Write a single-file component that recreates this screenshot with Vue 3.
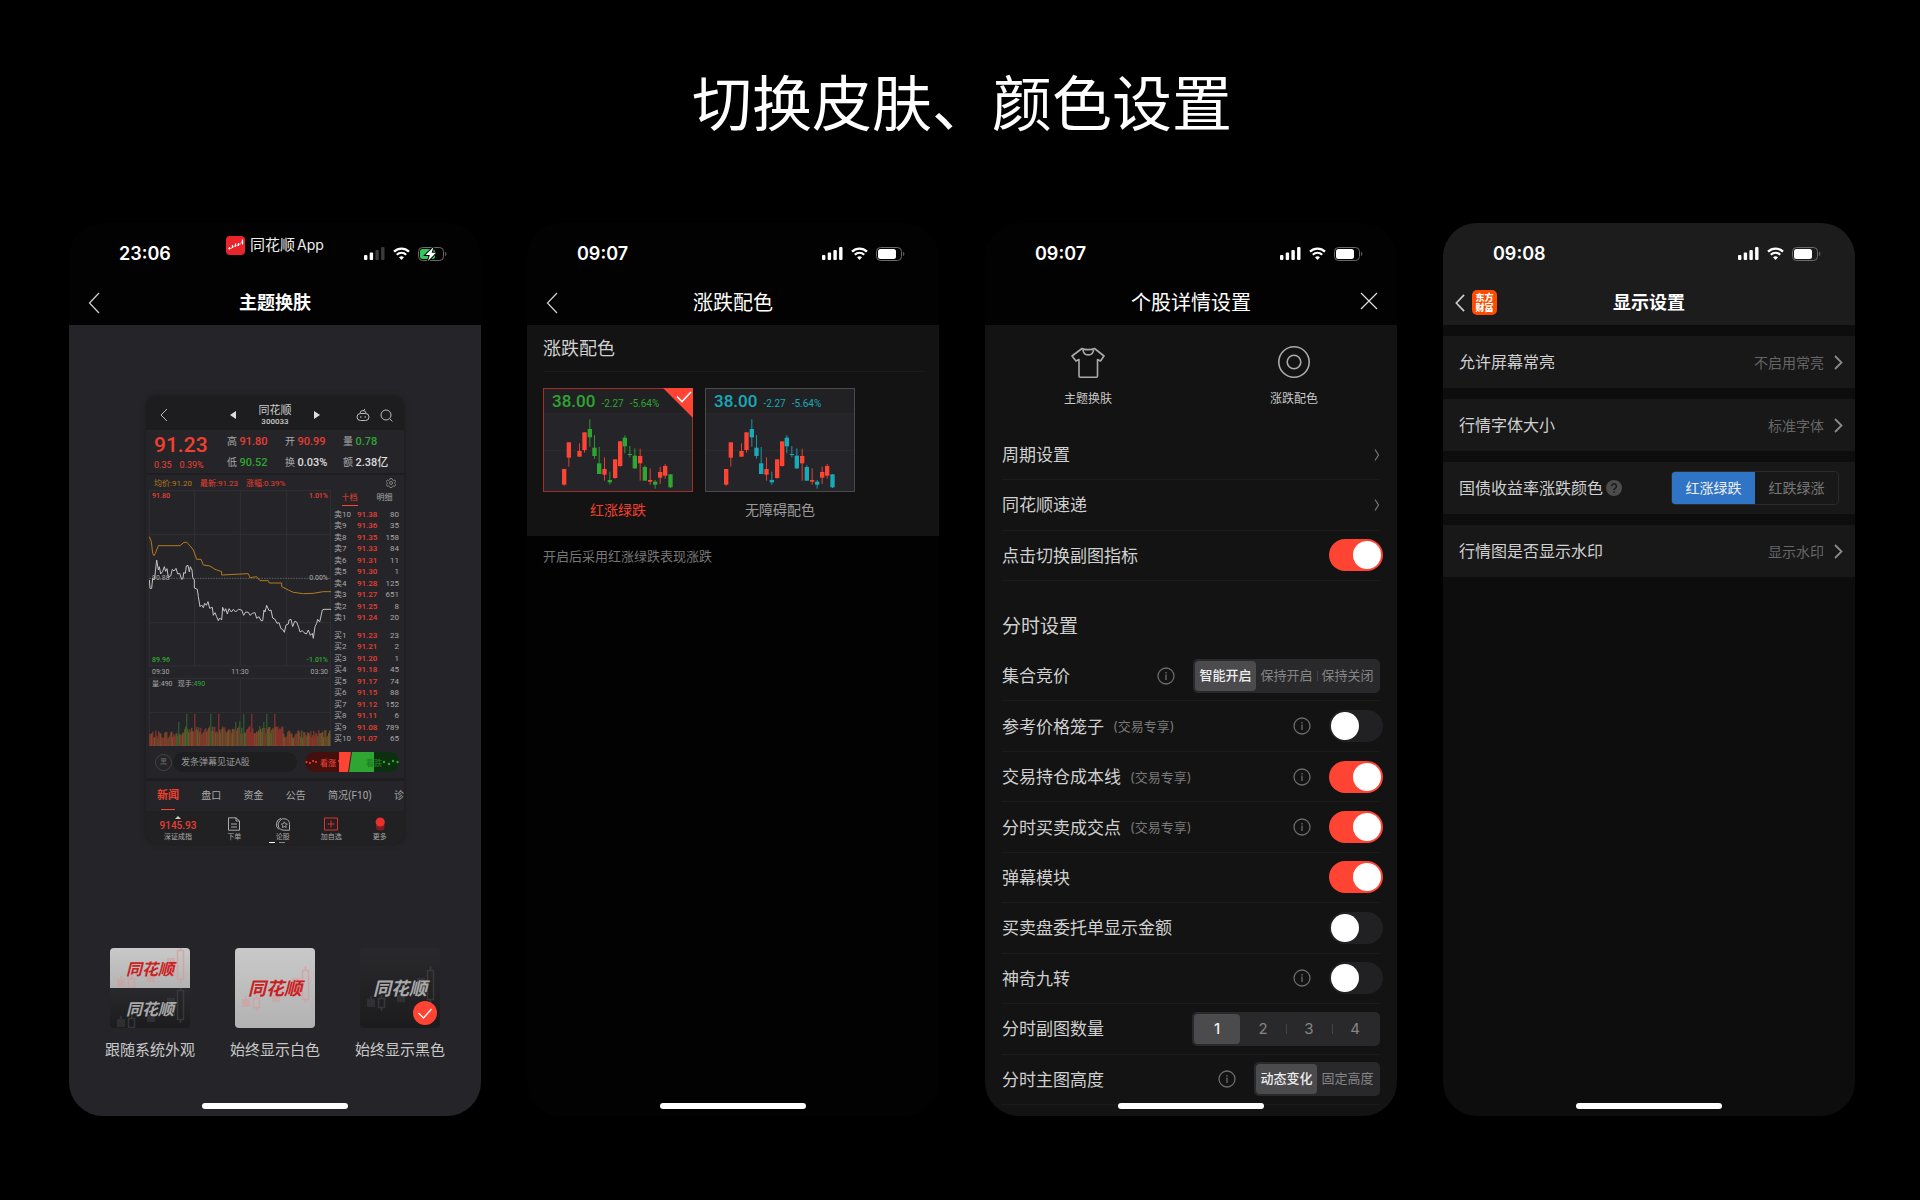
<template>
  <main class="board">
    <h1 class="board-title">切换皮肤、颜色设置</h1>

    <div class="phones">
      <section
        v-for="phone in phones"
        :key="phone.id"
        class="phone"
        :class="'phone-' + phone.id"
      >
        <!-- 状态栏 -->
        <div class="status">
          <span class="time">{{ phone.time }}</span>
          <span v-if="phone.id === 'skin'" class="live">
            <svg class="live-icon" viewBox="0 0 19 19">
              <rect width="19" height="19" rx="4" fill="#e9252b" />
              <path d="M2 13l1.500-1.500L5 13l1.500-2.500 1.500.5 1.500-2.500L11 10l1.500-2.500L14 8.500l2-3 1 1" fill="none" stroke="#ffc4c4" stroke-width=".8" />
              <path d="M3.500 11v2.500M6.500 9v3M9.500 7.500v3.500M12.500 7v3M16.500 3.500v5" stroke="#fff" stroke-width="1.200" />
            </svg>
            <span>同花顺<span class="latin">App</span></span>
          </span>
          <span v-else></span>
          <span class="signals">
            <svg class="signal" viewBox="0 0 21 13">
              <rect x="0" y="8" width="3.400" height="5" rx="1" fill="#fff" />
              <rect x="5.700" y="5.500" width="3.400" height="7.500" rx="1" fill="#fff" />
              <rect x="11.400" y="3" width="3.400" height="10" rx="1" :fill="phone.id === 'skin' ? '#3a3a3a' : '#fff'" />
              <rect x="17.100" y="0" width="3.400" height="13" rx="1" :fill="phone.id === 'skin' ? '#3a3a3a' : '#fff'" />
            </svg>
            <svg class="wifi" viewBox="0 0 17 13">
              <path d="M1 4.600a10.800 10.800 0 0 1 15 0" fill="none" stroke="#fff" stroke-width="2.300" />
              <path d="M3.800 7.700a6.700 6.700 0 0 1 9.400 0" fill="none" stroke="#fff" stroke-width="2.200" />
              <path d="M8.500 13l-2.500-2.700a3.700 3.700 0 0 1 5 0z" fill="#fff" />
            </svg>
            <svg class="battery" viewBox="0 0 29 14">
              <rect x=".5" y=".5" width="25" height="13" rx="4" fill="none" stroke="#6b6b6b" />
              <path d="M27.200 4.800c1.500.6 1.500 3.800 0 4.400z" fill="#6b6b6b" />
              <template v-if="phone.id === 'skin'">
                <rect x="2" y="2" width="15" height="10" rx="2.500" fill="#34c759" />
                <path class="bolt" d="M15.500 0L7.500 8h4.300L10 14l8-8.200h-4.300z" fill="#fff" stroke="#020202" stroke-width="2" />
              </template>
              <rect v-else x="2" y="2" width="18" height="10" rx="2.500" fill="#fff" />
            </svg>
          </span>
        </div>

        <!-- 导航栏 -->
        <header class="nav">
          <span class="nav-left">
            <button v-if="phone.id !== 'stock'" type="button" class="icon-btn" aria-label="返回">
              <svg class="back" viewBox="0 0 12 22">
                <path d="M11 1L1.500 11 11 21" fill="none" stroke="currentColor" :stroke-width="phone.id === 'display' ? 2 : 1.300" />
              </svg>
            </button>
            <span v-if="phone.id === 'display'" class="em-logo">东方<br />财富</span>
          </span>
          <h2>{{ phone.title }}</h2>
          <span class="nav-right">
            <button v-if="phone.id === 'stock'" type="button" class="icon-btn" aria-label="关闭">
              <svg class="close" viewBox="0 0 18 18">
                <path d="M1 1l16 16M17 1L1 17" stroke="#ddd" stroke-width="1.200" />
              </svg>
            </button>
          </span>
        </header>

        <!-- 主题换肤 -->
        <div v-if="phone.id === 'skin'" class="skin-body">
          <div class="mini">
            <div class="mini-head">
              <svg class="mini-back" viewBox="0 0 8 14"><path d="M7 1L1 7l6 6" fill="none" stroke="#bbb" /></svg>
              <svg class="mini-arrow" viewBox="0 0 6 8"><path d="M6 0v8L0 4z" fill="#ddd" /></svg>
              <div class="mini-name">
                <b>同花顺</b>
                <span>300033</span>
              </div>
              <svg class="mini-arrow" viewBox="0 0 6 8"><path d="M0 0v8l6-4z" fill="#ddd" /></svg>
              <svg class="mini-bot" viewBox="0 0 14 14">
                <rect x="1" y="5.500" width="12" height="7" rx="3.500" fill="none" stroke="#bbb" />
                <path d="M4 5.500a3 3 0 0 1 6 0M7 3l2-2" fill="none" stroke="#bbb" />
                <circle cx="4.800" cy="9" r=".8" fill="#bbb" /><circle cx="9.200" cy="9" r=".8" fill="#bbb" />
              </svg>
              <svg class="mini-search" viewBox="0 0 13 13">
                <circle cx="6" cy="6" r="5" fill="none" stroke="#bbb" /><path d="M9.600 9.600l2.800 2.800" stroke="#bbb" />
              </svg>
            </div>

            <div class="quote">
              <div class="quote-main">
                <strong>91.23</strong>
                <span>0.35</span><span>0.39%</span>
              </div>
              <div v-for="q in quotes" :key="q.name" class="quote-item">
                {{ q.name }} <b :class="q.tone">{{ q.value }}</b>
              </div>
            </div>

            <div class="avg-line">
              <span class="gold">均价:91.20</span>
              <span class="red">最新:91.23</span>
              <span class="red">涨幅:0.39%</span>
              <svg class="gear" viewBox="0 0 10 10">
                <path
                  d="M4 .5h2l.4 1.300 1 .6 1.300-.4 1 1.700-.9 1v.9l.9 1-1 1.700-1.300-.4-1 .6L6 9.500H4l-.4-1-1-.6-1.300.4-1-1.700.9-1v-.9l-.9-1 1-1.700 1.300.4 1-.6z"
                  fill="none" stroke="#999" stroke-width=".8"
                />
                <circle cx="5" cy="5" r="1.500" fill="none" stroke="#999" stroke-width=".8" />
              </svg>
            </div>

            <div class="market">
              <div class="trend">
                <svg class="trend-svg" viewBox="0 0 546 768" preserveAspectRatio="none">
                  <path
                    d="M1 2H546M1 133H546M1 398H546M1 528H546M1 565H546M1 668H546M1 766H546M1 2V528M137 2V528M274 2V528M413 2V528M545 2V766M1 565V766M274 565V766"
                    fill="none" stroke="#313134" stroke-width="3"
                  />
                  <path d="M1 265H546" stroke="#77777a" stroke-width="2" stroke-dasharray="5 3" />
                  <rect
                    v-for="(bar, i) in volumes"
                    :key="i"
                    :x="i * 3 + 1"
                    :y="768 - bar.h"
                    width="3"
                    :height="bar.h"
                    :fill="bar.fill"
                  />
                  <polyline
                    points="1,140 7,155 11,190 15,197 19,190 28,167 93,167 105,157 113,157 123,167 133,180 143,208 156,208 163,225 183,228 198,238 218,245 218,255 298,251 303,263 323,260 333,272 358,272 361,279 398,279 398,290 418,300 433,307 463,311 493,310 523,305 547,305"
                    fill="none" stroke="#b57a1c" stroke-width="3"
                  />
                  <polyline
                    points="1,270 3,295 8,295 11,265 15,270 18,255 23,210 28,240 31,230 35,252 41,244 46,230 50,244 54,236 58,262 65,258 70,238 75,243 81,235 86,252 92,250 98,268 102,266 104,248 109,250 112,228 117,226 121,246 124,230 129,240 131,262 136,270 136,294 145,298 148,320 153,350 158,345 163,353 167,340 172,346 177,335 182,355 190,352 193,376 198,368 203,380 208,392 212,384 218,390 221,352 226,364 230,356 235,372 240,356 247,366 253,358 260,366 268,358 278,360 284,376 290,366 298,367 303,376 310,370 318,368 323,385 330,380 336,392 341,392 345,360 348,366 353,346 360,362 366,360 371,384 378,388 384,400 390,398 396,416 401,418 406,427 411,405 418,402 420,390 426,388 431,410 437,394 443,396 449,412 453,426 460,422 465,428 472,432 478,420 484,436 490,430 493,445 498,410 503,400 506,388 512,396 516,378 520,360 525,358 547,358"
                    fill="none" stroke="#c4c4c4" stroke-width="3"
                  />
                </svg>
                <div class="axis red"><b>91.80</b><b>1.01%</b></div>
                <div class="axis middle"><span>90.88</span><span>0.00%</span></div>
                <div class="axis middle green"><b>89.96</b><b>-1.01%</b></div>
                <div class="axis"><span>09:30</span><span>11:30</span><span>03:30</span></div>
                <div class="volume-label">量:490&nbsp;&nbsp;&nbsp;现手:<span class="green">490</span></div>
              </div>

              <div class="depth">
                <div class="depth-tabs">
                  <button type="button" class="on">十档</button>
                  <button type="button">明细</button>
                </div>
                <table v-for="(side, s) in depth" :key="s">
                  <tbody>
                    <tr v-for="row in side" :key="row[0]">
                      <td>{{ row[0] }}</td>
                      <td class="red"><b>{{ row[1] }}</b></td>
                      <td class="num">{{ row[2] }}</td>
                    </tr>
                  </tbody>
                </table>
              </div>
            </div>

            <div class="danmu">
              <span class="danmu-icon">黑</span>
              <input type="text" placeholder="发条弹幕见证A股" aria-label="发条弹幕" />
              <div class="vote">
                <svg class="vote-svg" viewBox="0 0 94 21">
                  <defs>
                    <clipPath id="vote-clip"><rect width="94" height="20" rx="10" /></clipPath>
                  </defs>
                  <g clip-path="url(#vote-clip)">
                    <path d="M0 0h46l-3 20H0z" fill="#43100d" />
                    <path d="M34 0h12l-3 20h-9z" fill="#ff4433" />
                    <path d="M47 0h47v20H44z" fill="#0c2f0f" />
                    <path d="M47 0h22v20H44z" fill="#2fa532" />
                  </g>
                  <path d="M1.500 10h0M5 11h0M8 9h0M11 10h0M34 9h0M35 13h0" stroke="#ff4433" stroke-width="2" stroke-linecap="round" />
                  <path d="M79 10h0M84 12h0M88 9h0M92.500 10h0" stroke="#2fa532" stroke-width="2.500" stroke-linecap="round" />
                </svg>
                <button type="button" class="up">看涨</button>
                <button type="button" class="down">看跌</button>
              </div>
            </div>

            <div class="mini-tabs">
              <button v-for="(tab, i) in tabs" :key="tab" type="button" :class="{ on: i === 0 }">{{ tab }}</button>
            </div>

            <div class="mini-nav">
              <div class="mini-nav-item">
                <svg class="caret" viewBox="0 0 6 3"><path d="M3 0l3 3H0z" fill="#ccc" /></svg>
                <b class="red">9145.93</b>
                <span>深证成指</span>
              </div>
              <div class="mini-nav-item">
                <svg viewBox="0 0 14 14">
                  <path d="M1.500.8H9L12.500 4v9.200h-11zM9 .8V4h3.500M4 7h6M4 10h6" fill="none" stroke="#aaa" />
                </svg>
                <span>下单</span>
              </div>
              <div class="mini-nav-item">
                <svg viewBox="0 0 14 14">
                  <path d="M5 1.300A6.300 6.300 0 0 0 3 12.500M3.500 4a5.500 5.500 0 0 1 10 3.500v5.700H8A5.500 5.500 0 0 1 3.500 4z" fill="none" stroke="#aaa" />
                  <path d="M8.300 4.800l1 1.900 2 .3-1.500 1.500.4 2-1.900-1-1.900 1 .4-2L5.300 7l2-.3z" fill="none" stroke="#aaa" stroke-width=".9" />
                </svg>
                <span>论股</span>
              </div>
              <div class="mini-nav-item">
                <svg viewBox="0 0 14 14"><path d="M.5 1h13v12H.5zM7 3.500v7M3.500 7h7" fill="none" stroke="#e02f2f" /></svg>
                <span>加自选</span>
              </div>
              <div class="mini-nav-item">
                <svg viewBox="0 0 14 14">
                  <rect x="3" y="4" width="8.500" height="9.500" rx="3.500" fill="#7c1e1e" />
                  <circle cx="7.200" cy="5" r="4.600" fill="#e8302e" />
                </svg>
                <span>更多</span>
              </div>
              <i class="pager"></i>
            </div>
          </div>

          <div class="themes">
            <label v-for="theme in themes" :key="theme.value" class="theme">
              <input v-model="skin" type="radio" name="skin" :value="theme.value" />
              <span class="cover">
                <span v-for="tone in theme.tones" :key="tone" class="swatch" :class="tone">
                  <svg class="swatch-bg" viewBox="0 0 80 80" preserveAspectRatio="xMidYMid slice">
                    <path d="M7 51h8v8H7zM37 47h8v7h-8zM57 30h8v18h-8z" fill="currentColor" opacity=".5" />
                    <path d="M18.500 50.500h6v9h-6zM67.500 22.500h6v29h-6zM70.500 18v4M21.500 47v3M21.500 60v3M70.500 52v3M11 48v3" fill="none" stroke="currentColor" stroke-width="1.500" opacity=".7" />
                  </svg>
                  <em>同花顺</em>
                </span>
                <svg v-if="skin === theme.value" class="checked" viewBox="0 0 24 24">
                  <circle cx="12" cy="12" r="12" fill="#ff4433" />
                  <path d="M5.500 12l5 5 8-9" fill="none" stroke="#fff" stroke-width="1.300" />
                </svg>
              </span>
              <span class="theme-name">{{ theme.name }}</span>
            </label>
          </div>
        </div>

        <!-- 涨跌配色 -->
        <div v-if="phone.id === 'color'" class="color-body">
          <div class="color-panel">
            <h3>涨跌配色</h3>
            <div class="schemes">
              <label
                v-for="item in schemes"
                :key="item.value"
                class="scheme"
                :class="[item.value, { on: scheme === item.value }]"
              >
                <input v-model="scheme" type="radio" name="scheme" :value="item.value" />
                <span class="scheme-card">
                  <span class="scheme-quote"><b>38.00</b><span>-2.27</span><span>-5.64%</span></span>
                  <svg class="candles" viewBox="0 0 444 234">
                    <path d="M0 0H444M0 113H444" stroke="#2e2e32" stroke-width="3" />
                    <g v-for="c in candles" :key="c[0]" :fill="c[5] ? '#ff4433' : item.fall">
                      <rect :x="c[0] - 75" :y="c[3] - 609" width="3" :height="c[4] - c[3]" opacity=".85" />
                      <rect :x="c[0] - 80" :y="c[1] - 609" width="13" :height="c[2] - c[1]" />
                    </g>
                  </svg>
                  <svg v-if="scheme === item.value" class="corner" viewBox="0 0 30 30">
                    <path d="M0 0h30v30z" fill="#ff4433" />
                    <path d="M14 8.500l5 5 9-9.500" fill="none" stroke="#fff" stroke-width="1.600" />
                  </svg>
                </span>
                <span class="scheme-name">{{ item.name }}</span>
              </label>
            </div>
          </div>
          <p class="note">开启后采用红涨绿跌表现涨跌</p>
        </div>

        <!-- 个股详情设置 -->
        <div v-if="phone.id === 'stock'" class="stock-body">
          <div class="shortcuts">
            <button type="button">
              <svg viewBox="0 0 34 34">
                <path
                  d="M11 3.500C13 5 21 5 23.500 3.500L33 11l-3.500 5-3-1.500V31a1.200 1.200 0 0 1-1.200 1.200H9.200A1.200 1.200 0 0 1 8 31V14.500L5 16l-4-5zM12 5c.5 6.500 10 6.500 10.500 0"
                  fill="none" stroke="#aaa" stroke-width="1.600" stroke-linejoin="round"
                />
              </svg>
              主题换肤
            </button>
            <button type="button">
              <svg viewBox="0 0 34 34">
                <circle cx="17" cy="17" r="15.200" fill="none" stroke="#aaa" stroke-width="1.600" />
                <circle cx="17" cy="17" r="6.800" fill="none" stroke="#aaa" stroke-width="1.600" />
              </svg>
              涨跌配色
            </button>
          </div>

          <template v-for="group in groups" :key="group.key">
            <h3 v-if="group.title">{{ group.title }}</h3>
            <div class="rows" :class="group.key">
              <div v-for="row in group.rows" :key="row.name" class="row">
                <label v-if="row.type === 'switch'" class="row-name" :for="'sw-' + row.name">{{ row.name }}</label>
                <span v-else class="row-name">{{ row.name }}</span>
                <small v-if="row.vip">(交易专享)</small>
                <span class="spacer"></span>
                <button v-if="row.info" type="button" class="icon-btn info" aria-label="说明">
                  <svg viewBox="0 0 18 18">
                    <circle cx="9" cy="9" r="8" fill="none" stroke="#6c6c6e" stroke-width="1.300" />
                    <path d="M9 7.500v5.500M9 5v1.400" stroke="#6c6c6e" stroke-width="1.300" />
                  </svg>
                </button>
                <input v-if="row.type === 'switch'" :id="'sw-' + row.name" v-model="row.value" type="checkbox" class="switch" />
                <button v-if="row.type === 'link'" type="button" class="icon-btn" :aria-label="row.name">
                  <svg class="arrow" viewBox="0 0 6 12"><path d="M1 .5L4.500 6 1 11.500" fill="none" stroke="#777" stroke-width="1.200" /></svg>
                </button>
                <div v-if="row.type === 'segment'" class="segment" :class="{ digits: row.options.length === 4 }">
                  <label v-for="option in row.options" :key="option" :class="{ on: row.value === option }">
                    <input v-model="row.value" type="radio" :name="row.name" :value="option" />
                    <span>{{ option }}</span>
                  </label>
                </div>
              </div>
            </div>
          </template>
        </div>

        <!-- 显示设置 -->
        <div v-if="phone.id === 'display'" class="display-body">
          <div v-for="row in displayRows" :key="row.name" class="display-row">
            <span class="row-name">{{ row.name }}</span>
            <svg v-if="row.options" class="help" viewBox="0 0 16 16">
              <circle cx="8" cy="8" r="8" fill="#4c4c4c" />
              <path d="M5.600 6.200a2.400 2.400 0 1 1 3.600 2.100c-.8.5-1.200.8-1.200 1.700M8 11.300v1.500" fill="none" stroke="#181818" stroke-width="1.500" />
            </svg>
            <span class="spacer"></span>
            <div v-if="row.options" class="blue-segment">
              <label v-for="option in row.options" :key="option" :class="{ on: bondColor === option }">
                <input v-model="bondColor" type="radio" name="bond" :value="option" />
                <span>{{ option }}</span>
              </label>
            </div>
            <button v-else type="button" class="value-btn">
              {{ row.value }}
              <svg viewBox="0 0 9 15"><path d="M1 1l6.500 6.500L1 14" fill="none" stroke="#8a8a8a" stroke-width="1.800" /></svg>
            </button>
          </div>
        </div>

        <i class="home-bar"></i>
      </section>
    </div>
  </main>
</template>

<script setup>
import { ref, reactive } from 'vue'

const phones = [
  { id: 'skin', time: '23:06', title: '主题换肤' },
  { id: 'color', time: '09:07', title: '涨跌配色' },
  { id: 'stock', time: '09:07', title: '个股详情设置' },
  { id: 'display', time: '09:08', title: '显示设置' }
]

// 行情预览
const quotes = [
  { name: '高', value: '91.80', tone: 'red' },
  { name: '开', value: '90.99', tone: 'red' },
  { name: '量', value: '0.78', tone: 'green' },
  { name: '低', value: '90.52', tone: 'green' },
  { name: '换', value: '0.03%', tone: '' },
  { name: '额', value: '2.38亿', tone: '' }
]

const depth = [
  [
    ['卖10', '91.38', 80],
    ['卖9', '91.36', 35],
    ['卖8', '91.35', 158],
    ['卖7', '91.33', 84],
    ['卖6', '91.31', 11],
    ['卖5', '91.30', 1],
    ['卖4', '91.28', 125],
    ['卖3', '91.27', 651],
    ['卖2', '91.25', 8],
    ['卖1', '91.24', 20]
  ],
  [
    ['买1', '91.23', 23],
    ['买2', '91.21', 2],
    ['买3', '91.20', 1],
    ['买4', '91.18', 45],
    ['买5', '91.17', 74],
    ['买6', '91.15', 88],
    ['买7', '91.12', 152],
    ['买8', '91.11', 6],
    ['买9', '91.08', 789],
    ['买10', '91.07', 65]
  ]
]

const tabs = ['新闻', '盘口', '资金', '公告', '简况(F10)', '诊']

// 成交量柱：尖峰位置固定，其余按伪随机高度
const red = '#a3352e'
const green = '#2f6b31'
const spikes = {
  29: [72, green],
  37: [96, green],
  45: [96, red],
  61: [96, green],
  69: [96, red],
  86: [72, green],
  90: [74, green],
  94: [96, green],
  102: [96, red],
  114: [72, green],
  117: [96, green],
  125: [96, red]
}
const barColors = [red, '#7d6a2c', red, '#86602b', '#47702f', '#8f4a2c', red]
let seed = 7
const random = () => {
  seed = (seed * 1103515245 + 12345) % 2147483648
  return seed / 2147483648
}
const volumes = Array.from({ length: 181 }, (_, i) => {
  const noise = random()
  const color = barColors[Math.floor(random() * barColors.length)]
  if (spikes[i]) return { h: spikes[i][0], fill: spikes[i][1] }
  const base = i < 34 ? 22 : i < 135 ? 36 : 24
  return { h: base + noise * 24, fill: color }
})

const skin = ref('dark')
const themes = [
  { value: 'auto', name: '跟随系统外观', tones: ['light', 'dark'] },
  { value: 'light', name: '始终显示白色', tones: ['light'] },
  { value: 'dark', name: '始终显示黑色', tones: ['dark'] }
]

// 涨跌配色
const scheme = ref('classic')
const schemes = [
  { value: 'classic', name: '红涨绿跌', fall: '#2fa532' },
  { value: 'access', name: '无障碍配色', fall: '#18aab8' }
]

// [中心x, 实体上, 实体下, 影线上, 影线下, 是否上涨]
const candles = [
  [134, 777, 824, 777, 827, 1],
  [148, 697, 743, 697, 770, 1],
  [180, 723, 740, 700, 740, 1],
  [195, 667, 720, 667, 728, 1],
  [211, 657, 682, 628, 710, 0],
  [225, 713, 738, 675, 746, 0],
  [239, 760, 792, 711, 792, 0],
  [255, 777, 794, 742, 812, 1],
  [271, 810, 817, 785, 824, 0],
  [287, 748, 804, 748, 806, 1],
  [302, 694, 768, 694, 770, 1],
  [316, 683, 709, 676, 730, 0],
  [331, 732, 735, 708, 742, 0],
  [346, 737, 775, 715, 777, 0],
  [362, 738, 760, 716, 812, 1],
  [376, 771, 812, 766, 812, 0],
  [392, 810, 815, 775, 824, 1],
  [407, 815, 824, 810, 836, 0],
  [422, 786, 803, 770, 822, 1],
  [437, 768, 797, 762, 806, 1],
  [453, 793, 832, 793, 834, 0]
]

// 个股详情设置
const groups = reactive([
  {
    key: 'common',
    rows: [
      { name: '周期设置', type: 'link' },
      { name: '同花顺速递', type: 'link' },
      { name: '点击切换副图指标', type: 'switch', value: true }
    ]
  },
  {
    key: 'timeline',
    title: '分时设置',
    rows: [
      { name: '集合竞价', type: 'segment', info: true, value: '智能开启', options: ['智能开启', '保持开启', '保持关闭'] },
      { name: '参考价格笼子', type: 'switch', vip: true, info: true, value: false },
      { name: '交易持仓成本线', type: 'switch', vip: true, info: true, value: true },
      { name: '分时买卖成交点', type: 'switch', vip: true, info: true, value: true },
      { name: '弹幕模块', type: 'switch', value: true },
      { name: '买卖盘委托单显示金额', type: 'switch', value: false },
      { name: '神奇九转', type: 'switch', info: true, value: false },
      { name: '分时副图数量', type: 'segment', value: '1', options: ['1', '2', '3', '4'] },
      { name: '分时主图高度', type: 'segment', info: true, value: '动态变化', options: ['动态变化', '固定高度'] }
    ]
  }
])

// 显示设置
const bondColor = ref('红涨绿跌')
const displayRows = [
  { name: '允许屏幕常亮', value: '不启用常亮' },
  { name: '行情字体大小', value: '标准字体' },
  { name: '国债收益率涨跌颜色', options: ['红涨绿跌', '红跌绿涨'] },
  { name: '行情图是否显示水印', value: '显示水印' }
]
</script>

<style>
body {
  background: #000;
}
</style>

<style scoped>
.board {
  display: flex;
  flex-direction: column;
  box-sizing: border-box;
  min-height: 100vh;
  padding: 60px 65px 84px 69px;
  background: #000;
  color: #d0d0d0;
  font-family: Inter, "Noto Sans CJK SC", sans-serif;
}

.board *,
.board *::before {
  box-sizing: border-box;
}

.board-title {
  margin: 0 0 75px;
  color: #fff;
  font-size: 60px;
  font-weight: 400;
  line-height: 88px;
  text-align: center;
}

button {
  padding: 0;
  border: 0;
  background: none;
  color: inherit;
  font: inherit;
  cursor: pointer;
}

svg {
  display: block;
  flex: none;
}

label input[type="radio"] {
  position: absolute;
  inset: 0;
  width: 100%;
  height: 100%;
  margin: 0;
  appearance: none;
  cursor: pointer;
}

.spacer {
  flex: 1;
}

.red {
  color: #e93f33;
}

.green {
  color: #2fa532;
}

.gold {
  color: #b57a1c;
}

.phones {
  display: grid;
  flex: 1;
  grid-template-columns: repeat(4, minmax(0, 1fr));
  gap: 46px;
}

.phone {
  position: relative;
  display: flex;
  flex-direction: column;
  overflow: hidden;
  border-radius: 34px;
  background: #020202;
}

.phone-display {
  background: #0d0d0d;
}

.home-bar {
  position: absolute;
  bottom: 7px;
  left: 50%;
  width: 146px;
  height: 6px;
  border-radius: 3px;
  background: #fff;
  transform: translateX(-50%);
}

/* 状态栏 */
.status {
  display: grid;
  grid-template-columns: 1fr auto 1fr;
  align-items: center;
  height: 60px;
  padding: 1px 34px 0 50px;
}

.time {
  color: #fff;
  font-size: 18px;
  font-weight: 600;
}

.live {
  display: flex;
  align-items: center;
  align-self: start;
  gap: 5px;
  margin: 11px 16px 0 0;
  color: #eee;
  font-size: 15px;
  line-height: 20px;
}

.latin {
  margin-left: 2px;
  font-size: 14px;
}

.live-icon {
  width: 19px;
  height: 19px;
}

.signals {
  display: flex;
  align-items: center;
  justify-self: end;
  gap: 8px;
}

.signal {
  width: 21px;
  height: 13px;
}

.wifi {
  width: 17px;
  height: 13px;
}

.battery {
  width: 29px;
  height: 14px;
}

.bolt {
  paint-order: stroke;
}

/* 导航栏 */
.nav {
  display: grid;
  grid-template-columns: 1fr auto 1fr;
  align-items: center;
  height: 42px;
  padding: 0 19px 3px;
}

.nav h2 {
  margin: 0;
  color: #fff;
  font-size: 20px;
  font-weight: 400;
  line-height: 28px;
}

.phone-skin .nav h2,
.phone-display .nav h2 {
  font-size: 18px;
  font-weight: 600;
}

.nav-left {
  display: flex;
  align-items: center;
  gap: 6px;
}

.nav-right {
  justify-self: end;
}

.back {
  width: 12px;
  height: 22px;
  color: #ccc;
}

.close {
  width: 18px;
  height: 18px;
}

.phone-display .status,
.phone-display .nav {
  background: #1c1c1c;
}

.phone-display .nav {
  padding: 0 11px 3px;
}

.phone-display .back {
  height: 18px;
}

.em-logo {
  width: 25px;
  height: 25px;
  padding-top: 3px;
  border-radius: 5px;
  background: #ff4b00;
  color: #fff;
  font-size: 9px;
  font-weight: 900;
  line-height: 10px;
  text-align: center;
}

/* 主题换肤 */
.skin-body {
  flex: 1;
  padding: 71px 0 40px;
  background: #252529;
}

.mini {
  width: 258px;
  margin: 0 auto;
  overflow: hidden;
  border-radius: 10px;
  background: #252529;
  box-shadow: 0 0 5px #19191b;
  color: #a8a8a8;
  font-family: Roboto, "Noto Sans CJK SC", sans-serif;
}

.mini b {
  font-weight: 500;
}

.mini-head {
  display: flex;
  align-items: center;
  height: 34px;
  padding: 4px 11px 0 14px;
  background: #1d1d1f;
}

.mini-back {
  width: 8px;
  height: 14px;
  margin-right: 62px;
}

.mini-arrow {
  width: 6px;
  height: 8px;
}

.mini-name {
  display: flex;
  flex: 1;
  flex-direction: column;
  align-items: center;
  color: #ccc;
  font-size: 8px;
  font-weight: 500;
  line-height: 9px;
}

.mini-name b {
  font-size: 11px;
  font-weight: 400;
  line-height: 13px;
}

.mini-bot {
  width: 14px;
  height: 14px;
  margin: 0 10px 0 36px;
}

.mini-search {
  width: 13px;
  height: 13px;
}

.quote {
  display: grid;
  grid-template-columns: 73px 58px 58px 1fr;
  grid-template-rows: 21px 21px;
  height: 45px;
  padding: 1px 0 0 8px;
  border-bottom: 2px solid #1e1e20;
  font-size: 10px;
  line-height: 21px;
}

.quote-main {
  grid-row: 1 / 3;
  color: #f0402f;
  font-size: 9px;
  line-height: 12px;
}

.quote-main strong {
  display: block;
  font-size: 21px;
  font-weight: 500;
  line-height: 28px;
}

.quote-main span {
  margin-right: 8px;
}

.quote-item {
  white-space: nowrap;
}

.quote-item b {
  font-size: 11px;
}

.quote-item b:not(.red):not(.green) {
  color: #ddd;
}

.avg-line {
  display: flex;
  align-items: center;
  gap: 8px;
  height: 15px;
  padding: 0 8px;
  font-size: 8px;
}

.gear {
  width: 10px;
  height: 10px;
  margin-left: auto;
}

.market {
  display: grid;
  grid-template-columns: 182px 70px;
  grid-template-rows: 256px;
  gap: 1px;
  padding-left: 3px;
}

.trend {
  position: relative;
  font-size: 8px;
}

.trend-svg {
  position: absolute;
  inset: 0;
  width: 100%;
  height: 100%;
}

.axis {
  position: relative;
  display: flex;
  justify-content: space-between;
  padding: 0 3px;
  font-size: 7px;
  line-height: 12px;
}

.middle {
  margin-top: 70px;
}

.volume-label {
  position: relative;
  padding-left: 3px;
  font-size: 7px;
  line-height: 12px;
}

.depth {
  font-size: 8px;
}

.depth-tabs {
  display: flex;
  justify-content: space-around;
  margin-bottom: 3px;
  line-height: 15px;
}

.depth-tabs button {
  border-bottom: 1px solid transparent;
}

.depth-tabs .on {
  border-color: #ff4433;
  color: #e93f33;
}

.depth table {
  width: 100%;
  height: 115px;
  margin-bottom: 6px;
  border-collapse: collapse;
  line-height: 10px;
}

.depth table:last-child {
  margin-bottom: 0;
}

.depth td {
  padding: 0 0 0 2px;
}

.depth td.num {
  padding: 0 3px 0 0;
  text-align: right;
}

.danmu {
  display: flex;
  align-items: center;
  height: 32px;
  padding: 0 5px 0 9px;
}

.danmu-icon {
  width: 17px;
  height: 17px;
  border: 1px solid #444;
  border-radius: 50%;
  color: #666;
  font-size: 7px;
  line-height: 15px;
  text-align: center;
}

.danmu input {
  flex: 1;
  min-width: 0;
  height: 20px;
  margin: 0 8px 0 1px;
  padding: 0 8px;
  border: 0;
  border-radius: 10px;
  background: #1e1e20;
  font: 9px Roboto, "Noto Sans CJK SC", sans-serif;
}

.danmu input::placeholder {
  color: #999;
}

.vote {
  position: relative;
  display: flex;
  align-items: center;
  justify-content: space-between;
  width: 94px;
  height: 21px;
  padding: 0 17px 0 15px;
  font-size: 8px;
  font-weight: 500;
}

.vote-svg {
  position: absolute;
  inset: 0;
}

.vote button {
  position: relative;
}

.vote .up {
  color: #e93f33;
}

.vote .down {
  color: #1d7a20;
}

.mini-tabs {
  display: flex;
  justify-content: space-between;
  height: 33px;
  padding-left: 11px;
  border-top: 3px solid #1e1e20;
  font-size: 10px;
  line-height: 28px;
  white-space: nowrap;
}

.mini-tabs button {
  position: relative;
}

.mini-tabs .on {
  color: #f0402f;
  font-size: 11px;
  font-weight: 700;
}

.mini-tabs .on::before {
  position: absolute;
  bottom: 1px;
  left: 4px;
  width: 14px;
  height: 1px;
  background: #ff4433;
  content: "";
}

.mini-nav {
  position: relative;
  display: grid;
  grid-template-columns: 64px repeat(4, 1fr);
  height: 33px;
  background: #212123;
  font-size: 7px;
  line-height: 10px;
}

.mini-nav-item {
  display: flex;
  flex-direction: column;
  align-items: center;
  justify-content: flex-end;
  gap: 1px;
  padding-bottom: 2px;
}

.mini-nav-item svg {
  width: 14px;
  height: 14px;
}

.mini-nav-item .caret {
  width: 6px;
  height: 3px;
}

.mini-nav-item b {
  padding-top: 1px;
  font-size: 10px;
}

.pager {
  position: absolute;
  bottom: 1px;
  left: 123px;
  width: 6px;
  height: 1px;
  background: #fff;
  box-shadow: 10px 0 #888;
}

.themes {
  display: flex;
  justify-content: center;
  gap: 35px;
  margin-top: 104px;
}

.theme {
  position: relative;
  display: flex;
  flex-direction: column;
  align-items: center;
  color: #c8c8c8;
  font-size: 15px;
  line-height: 22px;
}

.theme-name {
  margin-top: 11px;
}

.cover {
  position: relative;
  display: flex;
  flex-direction: column;
  width: 80px;
  height: 80px;
}

.swatch {
  position: relative;
  display: flex;
  flex: 1;
  align-items: center;
  justify-content: center;
  overflow: hidden;
  padding-top: 2px;
  background: linear-gradient(#c9c9c9, #b2b2b2);
  color: #d59a9a;
}

.swatch.dark {
  background: linear-gradient(#29292d, #1c1c1e);
  color: #414145;
}

.swatch:first-child {
  border-radius: 4px 4px 0 0;
}

.swatch:last-of-type {
  border-radius: 0 0 4px 4px;
}

.swatch:only-of-type {
  border-radius: 4px;
}

.swatch-bg {
  position: absolute;
  inset: 0;
  width: 100%;
  height: 100%;
}

.swatch em {
  position: relative;
  color: #c9211f;
  font-size: 18px;
  font-weight: 700;
}

.swatch.dark em {
  color: #a9a9a9;
}

.swatch:not(:only-of-type) em {
  font-size: 16px;
}

.checked {
  position: absolute;
  right: 3px;
  bottom: 3px;
  width: 24px;
  height: 24px;
}

/* 涨跌配色 */
.color-panel {
  padding: 0 16px 16px;
  background: #131313;
}

.color-panel h3 {
  margin: 0 0 16px;
  padding-top: 2px;
  border-bottom: 1px solid #1b1b1b;
  font-size: 18px;
  font-weight: 400;
  line-height: 44px;
}

.schemes {
  display: flex;
  gap: 12px;
}

.scheme {
  position: relative;
  color: #9a9a9a;
  font-size: 14px;
  text-align: center;
}

.scheme-card {
  position: relative;
  display: block;
  width: 150px;
  border: 1px solid #4a4a4c;
  background: #252529;
}

.scheme.on .scheme-card {
  border-color: #a22f27;
}

.scheme-quote {
  display: flex;
  align-items: baseline;
  gap: 6px;
  height: 24px;
  padding-left: 8px;
  background: #212123;
  color: #2fa532;
  font-family: Roboto, sans-serif;
  font-size: 10px;
  line-height: 24px;
}

.access .scheme-quote {
  color: #18aab8;
}

.scheme-quote b {
  font-size: 17px;
  font-weight: 500;
}

.candles {
  width: 148px;
  height: 78px;
}

.corner {
  position: absolute;
  top: -1px;
  right: -1px;
  width: 30px;
  height: 30px;
}

.scheme-name {
  display: block;
  margin-top: 8px;
  line-height: 20px;
}

.scheme.on .scheme-name {
  color: #f0402f;
}

.note {
  margin: 0;
  padding: 0 16px;
  color: #777;
  font-size: 13px;
  line-height: 40px;
}

/* 个股详情设置 */
.stock-body {
  flex: 1;
  background: #131313;
}

.shortcuts {
  display: grid;
  grid-template-columns: 1fr 1fr;
  height: 105px;
  padding-top: 20px;
}

.shortcuts button {
  display: flex;
  flex-direction: column;
  align-items: center;
  gap: 11px;
  color: #c8c8c8;
  font-size: 12px;
  line-height: 18px;
}

.shortcuts svg {
  width: 34px;
  height: 34px;
}

.stock-body h3 {
  margin: 0;
  padding: 27px 17px 5px;
  font-size: 19px;
  font-weight: 400;
  line-height: 38px;
}

.rows {
  display: grid;
  grid-auto-rows: 1fr;
  padding: 0 17px;
}

.rows.common {
  min-height: 151px;
}

.rows.timeline {
  min-height: 454px;
}

.row {
  display: flex;
  align-items: center;
  border-bottom: 1px solid #1b1b1b;
  font-size: 17px;
}

.row-name {
  padding-bottom: 2px;
}

.row small {
  margin-left: 9px;
  padding-bottom: 1px;
  color: #7a7a7a;
  font-size: 13px;
}

.arrow {
  width: 6px;
  height: 12px;
}

.info {
  margin-right: 18px;
}

.info svg {
  width: 18px;
  height: 18px;
}

.switch {
  position: relative;
  width: 54px;
  height: 32px;
  margin: 0 -3px 0 0;
  border-radius: 16px;
  background: #212123;
  appearance: none;
  cursor: pointer;
}

.switch::before {
  position: absolute;
  top: 2px;
  left: 2px;
  width: 28px;
  height: 28px;
  border-radius: 50%;
  background: #fff;
  content: "";
}

.switch:checked {
  background: #ff4433;
}

.switch:checked::before {
  left: 24px;
}

.segment {
  display: flex;
  height: 34px;
  padding: 2px;
  border-radius: 5px;
  background: #29292b;
  color: #858585;
  font-size: 13px;
  line-height: 29px;
}

.segment label {
  position: relative;
  width: 61px;
  border-radius: 4px;
  text-align: center;
}

.segment.digits label {
  width: 46px;
  font-size: 15px;
}

.segment .on {
  background: #4b4b4d;
  color: #eee;
  font-weight: 500;
}

.segment label:not(.on) + label::before {
  position: absolute;
  top: 10px;
  left: 0;
  width: 1px;
  height: 10px;
  background: #444;
  content: "";
}

/* 显示设置 */
.display-body {
  display: flex;
  flex-direction: column;
  gap: 11px;
  padding-top: 11px;
}

.display-row {
  display: flex;
  align-items: center;
  height: 52px;
  padding: 0 12px 0 16px;
  background: #181818;
  font-size: 16px;
}

.help {
  width: 16px;
  height: 16px;
  margin-left: 3px;
}

.value-btn {
  display: flex;
  align-items: center;
  gap: 10px;
  color: #666;
  font-size: 14px;
}

.value-btn svg {
  width: 9px;
  height: 15px;
}

.blue-segment {
  display: flex;
  margin-right: 4px;
  overflow: hidden;
  border: 1px solid #2b2b2b;
  border-radius: 4px;
  color: #777;
  font-size: 14px;
  line-height: 32px;
}

.blue-segment label {
  position: relative;
  width: 83px;
  text-align: center;
}

.blue-segment .on {
  background: #3074c6;
  color: #eee;
}
</style>
